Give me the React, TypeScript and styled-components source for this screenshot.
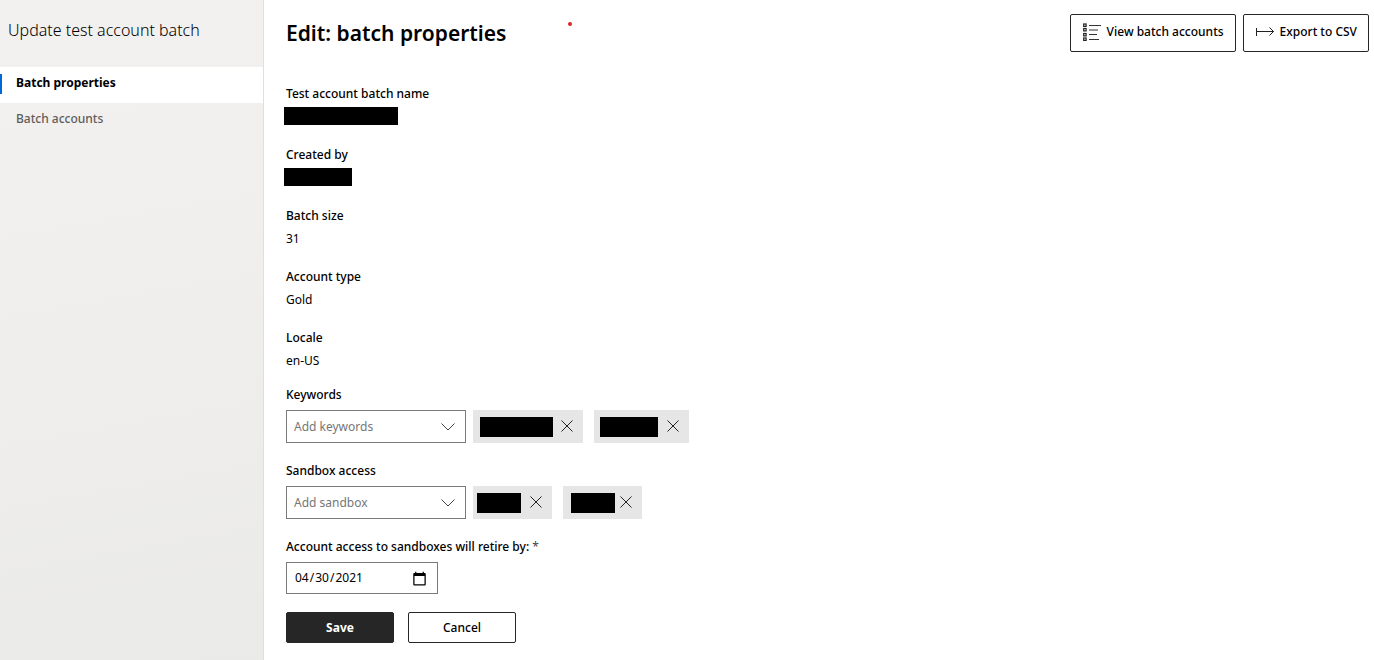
import React from "react";
import styled, { createGlobalStyle } from "styled-components";

const GlobalStyle = createGlobalStyle`
  *, *::before, *::after { box-sizing: border-box; }
  body {
    margin: 0;
    background: #fff;
    color: #000;
    font-family: "Segoe UI", "Noto Sans", "Open Sans", sans-serif;
    font-size: 12px;
    line-height: 20px;
  }
  button, input { font: inherit; color: inherit; }
`;

const Page = styled.div`
  display: flex;
  min-height: 100vh;
`;

const Sidebar = styled.nav`
  flex: 0 0 264px;
  border-right: 1px solid #dfdfde;
  background: linear-gradient(170deg, #f2f1ef 0%, #f0efed 40%, #eaeae8 100%);
`;

const SidebarTitle = styled.h2`
  margin: 0;
  padding: 18px 8px 25px;
  font-size: 16px;
  line-height: 24px;
  font-weight: 300;
`;

const NavList = styled.ul`
  margin: 0;
  padding: 0;
  list-style: none;
`;

const NavLink = styled.a<{ $active?: boolean }>`
  display: flex;
  height: 36px;
  padding: 6px 0 0 14px;
  border-left: 2px solid transparent;
  border-image: ${(p) =>
    p.$active
      ? "linear-gradient(transparent 7px, #0067d6 7px, #0067d6 27px, transparent 27px) 0 0 0 2"
      : "none"};
  background: ${(p) => (p.$active ? "#fff" : "transparent")};
  color: ${(p) => (p.$active ? "#000" : "#5e5d5c")};
  font-weight: ${(p) => (p.$active ? 700 : 500)};
  text-decoration: none;
`;

const Main = styled.main`
  flex: 1;
  min-width: 0;
  padding: 14px 5px 16px 22px;
`;

const Header = styled.header`
  display: flex;
  align-items: flex-start;
  gap: 62px;
`;

const Title = styled.h1`
  margin: 0;
  font-size: 21px;
  line-height: 38px;
  font-weight: 600;
`;

const Dot = styled.span`
  width: 4px;
  height: 4px;
  margin-top: 8px;
  border-radius: 50%;
  background: #d8232a;
`;

const Actions = styled.div`
  display: flex;
  gap: 7px;
  margin-left: auto;
`;

const ActionButton = styled.button`
  display: flex;
  align-items: center;
  gap: 6px;
  height: 38px;
  padding: 0 11px 2px 12px;
  border: 1px solid #262626;
  border-radius: 2px;
  background: #fff;
  font-weight: 500;
`;

const Details = styled.dl`
  display: grid;
  gap: 17px;
  margin: 32px 0 13px;
`;

const Detail = styled.div`
  display: grid;
  gap: 3px;
`;

const Term = styled.dt`
  font-weight: 500;
`;

const Value = styled.dd`
  height: 21px;
  margin: 0;
`;

const Redaction = styled.span<{ $width: number }>`
  display: block;
  width: ${(p) => p.$width}px;
  height: 18px;
  margin-left: -2px;
  background: #000;
`;

const Form = styled.form`
  display: grid;
  gap: 18px;
`;

const Field = styled.div`
  display: grid;
  gap: 5px;
`;

const Label = styled.label`
  font-weight: 500;
`;

const Required = styled.span`
  color: #444;
  font-weight: 400;
`;

const Row = styled.div<{ $gap: number }>`
  display: flex;
  flex-wrap: wrap;
  gap: ${(p) => p.$gap}px;
`;

const Combo = styled.div`
  display: flex;
  align-items: center;
  width: 180px;
  height: 33px;
  padding: 1px 10px 0 7px;
  border: 1px solid #7a7a7a;
`;

const ComboInput = styled.input`
  flex: 1;
  min-width: 0;
  padding: 0;
  border: 0;
  outline: 0;
  background: transparent;

  &::placeholder {
    color: #767676;
    opacity: 1;
  }
`;

const Chip = styled.span`
  display: flex;
  align-items: center;
  justify-content: space-between;
  height: 33px;
  background: #e6e6e6;
`;

const ChipText = styled.span<{ $width: number; $inset: number }>`
  width: ${(p) => p.$width}px;
  height: 20px;
  margin-left: ${(p) => p.$inset}px;
  background: #000;
`;

const ChipRemove = styled.button<{ $width: number }>`
  display: flex;
  align-items: center;
  justify-content: flex-end;
  width: ${(p) => p.$width}px;
  height: 33px;
  padding: 0 10px 2px 0;
  border: 0;
  background: transparent;
`;

const DateInput = styled.input`
  width: 152px;
  height: 32px;
  padding: 0 10px 0 7px;
  border: 1px solid #7a7a7a;
  background: #fff;

  &::-webkit-calendar-picker-indicator {
    width: 15px;
    height: 15px;
    padding: 0;
    background-size: 15px 15px;
  }
`;

const FormButton = styled.button<{ $primary?: boolean }>`
  width: 108px;
  height: 31px;
  padding: 0;
  border: 1px solid #262626;
  border-radius: 2px;
  background: ${(p) => (p.$primary ? "#262626" : "#fff")};
  color: ${(p) => (p.$primary ? "#fff" : "#000")};
  font-weight: ${(p) => (p.$primary ? 700 : 500)};
`;

const ListIcon = () => (
  <svg width="18" height="18" viewBox="0 0 18 18" fill="none" aria-hidden="true">
    {[1, 5.5, 10.5, 15].map((y) => (
      <rect key={y} x="0.7" y={y} width="2.4" height="2.4" stroke="#222" strokeWidth="1.2" />
    ))}
    <path d="M6 2.5h12M6 7h9M6 11.5h8M6 16.5h10" stroke="#333" />
  </svg>
);

const ExportIcon = () => (
  <svg width="18" height="18" viewBox="0 0 18 18" fill="none" stroke="#222" aria-hidden="true">
    <path d="M0.5 5v8M0.5 8.5h17M13.5 4.5l4 4-4 4" />
  </svg>
);

const Chevron = () => (
  <svg width="14" height="8" viewBox="0 0 14 8" fill="none" stroke="#444" aria-hidden="true">
    <path d="M0.5 0.5L7 7l6.5-6.5" />
  </svg>
);

const CloseIcon = () => (
  <svg width="12" height="12" viewBox="0 0 12 12" fill="none" stroke="#222" aria-hidden="true">
    <path d="M0.5 0.5l11 11M11.5 0.5l-11 11" />
  </svg>
);

type ChipData = { width: number; inset: number; remove: number };

const details: { term: string; value?: string; redacted?: number }[] = [
  { term: "Test account batch name", redacted: 114 },
  { term: "Created by", redacted: 68 },
  { term: "Batch size", value: "31" },
  { term: "Account type", value: "Gold" },
  { term: "Locale", value: "en-US" },
];

const pickers: { id: string; label: string; placeholder: string; chips: ChipData[] }[] = [
  {
    id: "keywords",
    label: "Keywords",
    placeholder: "Add keywords",
    chips: [
      { width: 73, inset: 7, remove: 30 },
      { width: 58, inset: 6, remove: 31 },
    ],
  },
  {
    id: "sandbox",
    label: "Sandbox access",
    placeholder: "Add sandbox",
    chips: [
      { width: 44, inset: 4, remove: 31 },
      { width: 44, inset: 8, remove: 27 },
    ],
  },
];

export default function App() {
  return (
    <>
      <GlobalStyle />
      <Page>
        <Sidebar>
          <SidebarTitle>Update test account batch</SidebarTitle>
          <NavList>
            <li>
              <NavLink href="#properties" $active aria-current="page">
                Batch properties
              </NavLink>
            </li>
            <li>
              <NavLink href="#accounts">Batch accounts</NavLink>
            </li>
          </NavList>
        </Sidebar>
        <Main>
          <Header>
            <Title>Edit: batch properties</Title>
            <Dot />
            <Actions>
              <ActionButton type="button">
                <ListIcon />
                View batch accounts
              </ActionButton>
              <ActionButton type="button">
                <ExportIcon />
                Export to CSV
              </ActionButton>
            </Actions>
          </Header>
          <Details>
            {details.map((d) => (
              <Detail key={d.term}>
                <Term>{d.term}</Term>
                <Value>{d.redacted ? <Redaction $width={d.redacted} /> : d.value}</Value>
              </Detail>
            ))}
          </Details>
          <Form onSubmit={(e) => e.preventDefault()}>
            {pickers.map((p) => (
              <Field key={p.id}>
                <Label htmlFor={p.id}>{p.label}</Label>
                <Row $gap={7}>
                  <Combo>
                    <ComboInput id={p.id} type="text" placeholder={p.placeholder} />
                    <Chevron />
                  </Combo>
                  <Row $gap={11}>
                    {p.chips.map((c, i) => (
                      <Chip key={i}>
                        <ChipText $width={c.width} $inset={c.inset} />
                        <ChipRemove type="button" aria-label="Remove" $width={c.remove}>
                          <CloseIcon />
                        </ChipRemove>
                      </Chip>
                    ))}
                  </Row>
                </Row>
              </Field>
            ))}
            <Field>
              <Label htmlFor="retire">
                Account access to sandboxes will retire by: <Required>*</Required>
              </Label>
              <DateInput id="retire" type="date" defaultValue="2021-04-30" />
            </Field>
            <Row $gap={14}>
              <FormButton type="submit" $primary>
                Save
              </FormButton>
              <FormButton type="button">Cancel</FormButton>
            </Row>
          </Form>
        </Main>
      </Page>
    </>
  );
}
